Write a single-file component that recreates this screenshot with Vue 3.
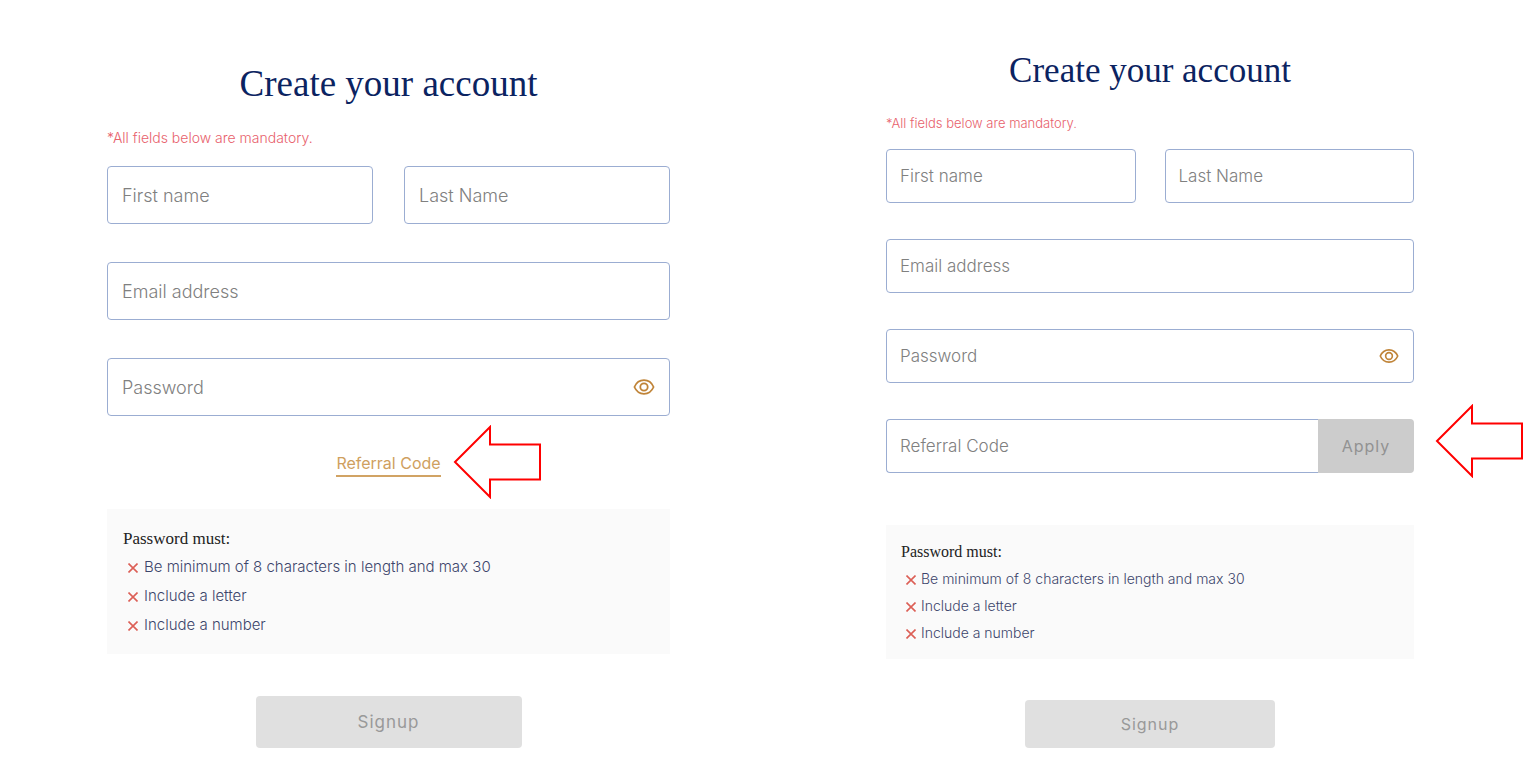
<script setup>
import { ref } from 'vue'

const rules = [
  'Be minimum of 8 characters in length and max 30',
  'Include a letter',
  'Include a number',
]
const panels = [
  { id: 'before', expanded: false },
  { id: 'after', expanded: true },
]
const shown = ref({ before: false, after: false })
</script>

<template>
  <main class="page">
    <form v-for="panel in panels" :key="panel.id" class="panel" :class="panel.id" @submit.prevent>
      <h1>Create your account</h1>
      <p class="note">*All fields below are mandatory.</p>

      <div class="fields">
        <div class="names">
          <input type="text" placeholder="First name" aria-label="First name" />
          <input type="text" placeholder="Last Name" aria-label="Last Name" />
        </div>
        <input type="email" placeholder="Email address" aria-label="Email address" />
        <div class="password">
          <input :type="shown[panel.id] ? 'text' : 'password'" placeholder="Password" aria-label="Password" />
          <button type="button" class="eye" aria-label="Show password" @click="shown[panel.id] = !shown[panel.id]">
            <svg viewBox="0 0 22 16" fill="none" stroke="currentColor" stroke-width="1.8">
              <path d="M1.4 8C3.4 3.4 6.9 1.2 11 1.2S18.600 3.400 20.600 8C18.600 12.600 15.100 14.800 11 14.800S3.400 12.600 1.400 8Z" stroke-linejoin="round" />
              <circle cx="11" cy="8" r="3.700" />
            </svg>
          </button>
        </div>
        <div v-if="panel.expanded" class="referral">
          <input type="text" placeholder="Referral Code" aria-label="Referral Code" />
          <button type="button" class="apply">Apply</button>
          <svg class="arrow" viewBox="0 0 88 74" aria-hidden="true">
            <path d="M2 37L37 2V19.500H87V54.500H37V72Z" />
          </svg>
        </div>
      </div>

      <div v-if="!panel.expanded" class="link-row">
        <a href="#referral">Referral Code</a>
        <svg class="arrow" viewBox="0 0 88 74" aria-hidden="true">
          <path d="M2 37L37 2V19.500H87V54.500H37V72Z" />
        </svg>
      </div>

      <section class="rules">
        <h2>Password must:</h2>
        <ul>
          <li v-for="rule in rules" :key="rule">
            <svg viewBox="0 0 10 10" aria-hidden="true"><path d="M0.500 0.500L9.500 9.500M9.500 0.500L0.500 9.500" /></svg>
            <span>{{ rule }}</span>
          </li>
        </ul>
      </section>

      <button type="submit" class="signup">Signup</button>
    </form>
  </main>
</template>

<style>
body {
  background: #fff;
}
</style>

<style scoped>
.page {
  display: grid;
  grid-template-columns: 107fr 563fr 216fr 528fr 109fr;
  align-items: start;
  overflow-x: clip;
  font-family: Inter, "Liberation Sans", sans-serif;
}
.page * {
  box-sizing: border-box;
}
.panel {
  display: flex;
  flex-direction: column;
  min-width: 0;
}
.before {
  grid-column: 2;
  padding-top: 60px;
}
.after {
  grid-column: 4;
  padding-top: 49px;
}
h1 {
  margin: 0 0 20px;
  text-align: center;
  font: 400 37px/48px "Liberation Serif", serif;
  color: #0b2361;
}
.note {
  margin: 0 0 18px;
  font-size: 14px;
  font-weight: 300;
  line-height: 20px;
  color: #e8616c;
}
.fields {
  display: grid;
  gap: 38px;
}
.names {
  display: grid;
  grid-template-columns: 1fr 1fr;
  gap: 31px;
}
input {
  width: 100%;
  min-width: 0;
  height: 58px;
  padding: 0 14px;
  border: 1px solid #9badd2;
  border-radius: 4px;
  background: #fff;
  font: 300 18px/24px Inter, "Liberation Sans", sans-serif;
  color: #333;
}
input::placeholder {
  color: #808080;
  opacity: 1;
}
button {
  padding: 0;
  border: 0;
  cursor: pointer;
}
.password,
.referral,
.link-row {
  position: relative;
}
.password input {
  padding-right: 52px;
}
.eye {
  position: absolute;
  top: 0;
  right: 15px;
  bottom: 0;
  display: flex;
  align-items: center;
  background: none;
  color: #c08438;
}
.eye svg {
  width: 22px;
  height: 16px;
}
.referral {
  display: flex;
}
.referral input {
  flex: 1;
  border-right: 0;
  border-radius: 4px 0 0 4px;
}
.apply {
  width: 96px;
  border-radius: 0 4px 4px 0;
  background: #ccc;
  font: 400 16px/24px Inter, "Liberation Sans", sans-serif;
  letter-spacing: 1px;
  color: #929292;
}
.arrow {
  position: absolute;
  width: 88px;
  height: 74px;
  fill: #fff;
  stroke: #f00;
  stroke-width: 2;
}
.referral .arrow {
  top: -15px;
  left: calc(100% + 21px);
}
.link-row {
  align-self: center;
  margin: 35px 0 32px;
}
.link-row a {
  display: block;
  border-bottom: 2px solid #d1a364;
  font-size: 16px;
  line-height: 24px;
  text-decoration: none;
  color: #cf9f60;
}
.link-row .arrow {
  top: -26px;
  left: calc(100% + 12px);
}
.rules {
  padding: 17px 16px 15px;
  background: #fafafa;
}
h2 {
  margin: 0;
  font: 400 17px/26px "Liberation Serif", serif;
  color: #222;
}
ul {
  margin: 0;
  padding: 0 0 0 5px;
  list-style: none;
}
li {
  display: flex;
  align-items: center;
  gap: 6px;
  font-size: 15px;
  font-weight: 300;
  line-height: 29px;
  color: #3c456b;
}
li svg {
  flex: none;
  width: 10px;
  height: 10px;
  margin-top: 2px;
  fill: none;
  stroke: #dc5f56;
  stroke-width: 1.6;
}
.signup {
  align-self: center;
  width: 266px;
  height: 52px;
  margin-top: 42px;
  border-radius: 4px;
  background: #e0e0e0;
  font: 400 17px/24px Inter, "Liberation Sans", sans-serif;
  letter-spacing: 1px;
  color: #999;
}
.after h1 {
  font-size: 35px;
  line-height: 44px;
}
.after .note {
  margin-bottom: 16px;
  font-size: 13px;
}
.after .fields {
  gap: 36px;
}
.after .names {
  gap: 29px;
}
.after input {
  height: 54px;
  padding-left: 13px;
  font-size: 17px;
}
.after .eye svg {
  width: 20px;
}
.after .rules {
  margin-top: 52px;
  padding: 14px 15px 13px;
}
.after h2 {
  font-size: 16px;
}
.after li {
  gap: 5px;
  font-size: 14px;
  line-height: 27px;
}
.after .signup {
  width: 250px;
  height: 48px;
  margin-top: 41px;
  font-size: 16px;
}
</style>
